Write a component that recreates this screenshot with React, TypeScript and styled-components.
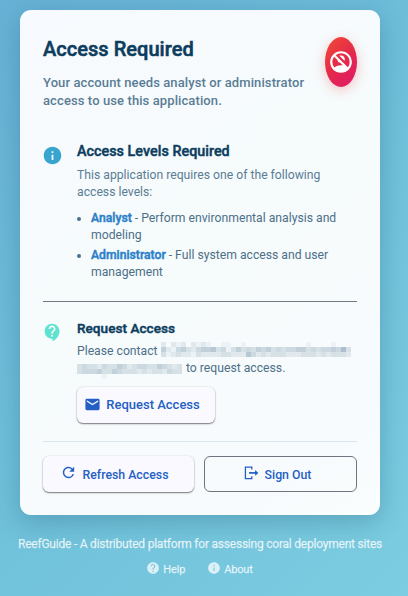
import React from 'react';
import styled, { createGlobalStyle, css } from 'styled-components';
import { MdInfo, MdContactSupport, MdMail, MdRefresh, MdHelp, MdNoAccounts } from 'react-icons/md';

const GlobalStyle = createGlobalStyle`
  * { box-sizing: border-box; }
  body {
    margin: 0;
    font-family: Roboto, "Liberation Sans", sans-serif;
    background: linear-gradient(135deg, #67b1d6 0%, #6fc0da 50%, #7ccde1 100%);
  }
  h1, h2, p, ul { margin: 0; }
  svg { display: block; flex: none; }
`;

const Page = styled.div`
  display: flex;
  flex-direction: column;
  align-items: center;
  width: 400px;
  height: 596px;
  padding-top: 10px;
`;

const Card = styled.main`
  width: 360px;
  height: 505px;
  padding: 27px 23px 0;
  border-radius: 11px;
  background: linear-gradient(145deg, #f7fafe 0%, #f6fbfc 45%, #f8fbfd 88%, #fafefe 100%);
  box-shadow: 0 7px 26px rgba(12, 61, 94, 0.26);
`;

const Header = styled.header`
  display: flex;
  justify-content: space-between;
  height: 106px;
`;

const Title = styled.h1`
  font-size: 20px;
  line-height: 24px;
  font-weight: 500;
  letter-spacing: 0.04px;
  color: #0c3d5e;
  -webkit-text-stroke: 0.55px currentColor;
`;

const Subtitle = styled.p`
  margin-top: 13px;
  font-size: 13px;
  line-height: 18px;
  font-weight: 500;
  letter-spacing: 0.1px;
  white-space: nowrap;
  color: #5a7d95;
`;

const Badge = styled.div`
  display: flex;
  align-items: center;
  justify-content: center;
  width: 32px;
  height: 50px;
  border-radius: 50%;
  color: #fff;
  background: linear-gradient(135deg, #f04438 10%, #e42a4a 50%, #df1a68 95%);
  box-shadow: 0 3px 12px rgba(240, 68, 56, 0.3);
`;

const Section = styled.section<{ $tone: string }>`
  display: grid;
  grid-template-columns: 20px 1fr;
  column-gap: 14px;
  color: #4d7089;
  white-space: nowrap;
  > svg { color: ${(p) => p.$tone}; margin: 2px 0 0 -1px; }
`;

const SectionGap = styled.div<{ $h: number }>`
  height: ${(p) => p.$h}px;
`;

const Heading = styled.h2<{ $size: number }>`
  font-size: ${(p) => p.$size}px;
  line-height: 17px;
  font-weight: 500;
  letter-spacing: 0.04px;
  color: #0c3d5e;
  -webkit-text-stroke: 0.45px currentColor;
`;

const Text = styled.p`
  margin-top: 7px;
  font-size: 12.2px;
  line-height: 17px;
  color: #5a7d95;
`;

const ContactText = styled(Text)`
  margin-top: 6px;
  color: #4d7089;
`;

const ContactLine = styled.span<{ $gap: number }>`
  display: flex;
  gap: ${(p) => p.$gap}px;
  height: 17px;
`;

const Levels = styled.ul`
  margin-top: 9px;
  padding-left: 14px;
  font-size: 12.2px;
  line-height: 17px;
`;

const Level = styled.li`
  height: 37px;
`;

const LevelName = styled.strong`
  font-weight: 500;
  color: #2b7fc9;
  -webkit-text-stroke: 0.45px currentColor;
`;

const Divider = styled.hr<{ $color: string }>`
  height: 1px;
  margin: 0;
  border: 0;
  background: ${(p) => p.$color};
`;

const Button = styled.button<{ $outlined?: boolean; $large?: boolean }>`
  display: flex;
  align-items: center;
  justify-content: center;
  gap: 6px;
  height: 36px;
  padding: 0 9px 3px 0;
  border: 0;
  border-radius: 6px;
  font: 500 12.3px/16px Roboto, sans-serif;
  color: #245fc4;
  background: #faf9ff;
  box-shadow: 0 1px 1.5px rgba(0, 0, 0, 0.5), 0 0 2px rgba(0, 0, 0, 0.12);
  ${(p) => p.$large && css`
    width: 138px;
    margin-top: 10px;
    padding: 0 8px 2px 0;
    gap: 5px;
    font-size: 13px;
  `}
  ${(p) => p.$outlined && css`
    padding-right: 6px;
    border: 1px solid #70747f;
    background: transparent;
    box-shadow: none;
  `}
`;

const ButtonLabel = styled.span<{ $drop?: number }>`
  padding-top: ${(p) => (p.$drop ?? 2) * 2}px;
`;

const Actions = styled.div`
  display: grid;
  grid-template-columns: 151px 153px;
  justify-content: space-between;
  margin-top: 14px;
`;

const Footer = styled.footer`
  display: flex;
  flex-direction: column;
  align-items: center;
  margin-top: 21px;
  color: rgba(255, 255, 255, 0.74);
`;

const Tagline = styled.p`
  font-size: 12px;
  line-height: 16px;
  letter-spacing: -0.22px;
  white-space: nowrap;
  -webkit-text-stroke: 0.25px currentColor;
`;

const FooterLinks = styled.nav`
  display: flex;
  gap: 22px;
  margin: 9px 1px 0 0;
`;

const FooterLink = styled.a`
  display: flex;
  align-items: flex-start;
  gap: 3px;
  font-size: 11px;
  line-height: 16px;
  letter-spacing: -0.15px;
  -webkit-text-stroke: 0.25px currentColor;
  > span { padding-top: 1px; }
`;

const MosaicSvg = styled.svg<{ $top: number }>`
  margin-top: ${(p) => p.$top}px;
`;

/* Redacted address, one digit of opacity per 5px cell. */
function Mosaic({ rows, top }: { rows: string[]; top: number }) {
  return (
    <MosaicSvg $top={top} width={rows[0].length * 5} height={rows.length * 5} shapeRendering="crispEdges" aria-hidden>
      {rows.flatMap((row, y) =>
        [...row].map((v, x) => (
          <rect key={`${x}-${y}`} x={x * 5} y={y * 5} width="5" height="5" fill="#5a7d95" opacity={Number(v) * 0.068} />
        )),
      )}
    </MosaicSvg>
  );
}

const ADDRESS_START = [
  '20212021210011001000000000000100001000',
  '52145324556341353435453434455343445473',
  '31232213222233222642323332223332323332',
];
const ADDRESS_END = [
  '343324335423443354323',
  '344453354333232332433',
  '000001000000000000000',
];

function SignOutIcon() {
  return (
    <svg width="15" height="14" viewBox="0 0 15 14" fill="none" stroke="currentColor" strokeWidth="1.3">
      <path d="M7.8 3.6V1.2H1.4v11.4h6.4v-2.4" />
      <path d="M5 6.9h7.5" strokeWidth="1.7" />
      <path d="M11.1 4v5.8L14.4 6.9z" fill="currentColor" stroke="none" />
    </svg>
  );
}

export default function App() {
  return (
    <>
      <GlobalStyle />
      <Page>
        <Card>
          <Header>
            <div>
              <Title>Access Required</Title>
              <Subtitle>
                Your account needs analyst or administrator
                <br />
                access to use this application.
              </Subtitle>
            </div>
            <Badge>
              <MdNoAccounts size={26} />
            </Badge>
          </Header>
          <Section $tone="#38a5cf">
            <MdInfo size={21} />
            <div>
              <Heading $size={14.3}>Access Levels Required</Heading>
              <Text>
                This application requires one of the following
                <br />
                access levels:
              </Text>
              <Levels>
                <Level>
                  <LevelName>Analyst</LevelName> - Perform environmental analysis and
                  <br />
                  modeling
                </Level>
                <Level>
                  <LevelName>Administrator</LevelName> - Full system access and user
                  <br />
                  management
                </Level>
              </Levels>
            </div>
          </Section>
          <SectionGap $h={17} />
          <Divider $color="#6f7982" />
          <SectionGap $h={18} />
          <Section $tone="#5fe3d0">
            <MdContactSupport size={21} />
            <div>
              <Heading $size={13.55}>Request Access</Heading>
              <ContactText as="div">
                <ContactLine $gap={3}>
                  Please contact <Mosaic rows={ADDRESS_START} top={-1} />
                </ContactLine>
                <ContactLine $gap={4}>
                  <Mosaic rows={ADDRESS_END} top={4} /> to request access.
                </ContactLine>
              </ContactText>
              <Button $large>
                <MdMail size={17} />
                <ButtonLabel $drop={1}>Request Access</ButtonLabel>
              </Button>
            </div>
          </Section>
          <SectionGap $h={18} />
          <Divider $color="#dbe8f1" />
          <Actions>
            <Button>
              <MdRefresh size={17} />
              <ButtonLabel>Refresh Access</ButtonLabel>
            </Button>
            <Button $outlined>
              <SignOutIcon />
              <ButtonLabel>Sign Out</ButtonLabel>
            </Button>
          </Actions>
        </Card>
        <Footer>
          <Tagline>ReefGuide - A distributed platform for assessing coral deployment sites</Tagline>
          <FooterLinks>
            <FooterLink>
              <MdHelp size={14} />
              <span>Help</span>
            </FooterLink>
            <FooterLink>
              <MdInfo size={14} />
              <span>About</span>
            </FooterLink>
          </FooterLinks>
        </Footer>
      </Page>
    </>
  );
}
